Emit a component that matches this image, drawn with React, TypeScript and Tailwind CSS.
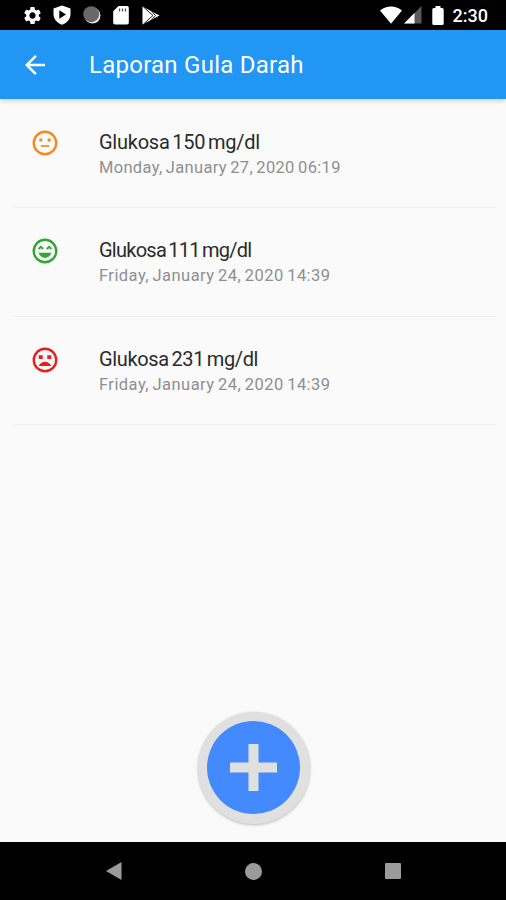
import { MdArrowBack, MdSettings } from "react-icons/md";

const readings = [
  {
    title: "Glukosa 150 mg/dl",
    date: "Monday, January 27, 2020 06:19",
    mood: "neutral",
    color: "text-[#f58a1f]",
    titleSpacing: "tracking-[-0.250px]",
    dateSpacing: "tracking-[0.310px]",
  },
  {
    title: "Glukosa 111 mg/dl",
    date: "Friday, January 24, 2020 14:39",
    mood: "happy",
    color: "text-[#33a436]",
    titleSpacing: "tracking-[-0.750px]",
    dateSpacing: "tracking-[0.450px]",
  },
  {
    title: "Glukosa 231 mg/dl",
    date: "Friday, January 24, 2020 14:39",
    mood: "sad",
    color: "text-[#e5201d]",
    titleSpacing: "tracking-[-0.350px]",
    dateSpacing: "tracking-[0.450px]",
  },
];

function Face({ mood, className }: { mood: string; className: string }) {
  return (
    <svg className={className} width="30" height="30" viewBox="0 0 24 24" fill="none">
      <circle cx="12" cy="12" r="9" stroke="currentColor" strokeWidth="1.9" />
      {mood === "neutral" && (
        <>
          <circle cx="8.700" cy="9.500" r="1.400" fill="currentColor" />
          <circle cx="15.300" cy="9.500" r="1.400" fill="currentColor" />
          <path stroke="currentColor" strokeWidth="1.400" d="M8.700 14.400h6.600" />
        </>
      )}
      {mood === "happy" && (
        <>
          <path stroke="currentColor" strokeWidth="1.500" d="M6.900 10.400 8.700 8.600l1.800 1.800M13.500 10.400l1.800-1.800 1.800 1.800" />
          <path fill="currentColor" d="M6.900 13.400h10.200c-.700 2.500-2.700 4.100-5.100 4.100s-4.400-1.600-5.100-4.100z" />
        </>
      )}
      {mood === "sad" && (
        <>
          <path fill="currentColor" d="M7 8.200h3.200v2.900H7zM13.800 8.200H17v2.900h-3.200z" />
          <path fill="currentColor" d="M12 13.300c-2.300 0-4.200 1.400-5 3.500h10c-.800-2.100-2.700-3.500-5-3.500z" />
        </>
      )}
    </svg>
  );
}

function StatusBar() {
  return (
    <div className="flex h-[30px] shrink-0 items-center justify-between bg-black pr-[18px] pl-[22px] text-white">
      <div className="flex items-center">
        <MdSettings size={21} />
        <svg className="ml-[10px]" width="18" height="20" viewBox="0 0 18 20">
          <path fill="#fff" d="M9 0.5 17.5 3.5V9c0 5-3.2 8.8-8.5 10.8C3.700 17.800.500 14 .500 9V3.500z" />
          <path fill="#000" d="M6.300 5.300 13 9.500l-6.700 4.200z" />
        </svg>
        <svg className="ml-[12px]" width="18" height="18" viewBox="0 0 18 18">
          <circle cx="9.500" cy="9.500" r="8" fill="#e4e4e4" />
          <circle cx="8.200" cy="8.200" r="8" fill="#686868" />
        </svg>
        <svg className="ml-[12px]" width="16" height="19" viewBox="0 0 16 19">
          <path fill="#fff" d="M5.500 0H14a1.800 1.800 0 0 1 1.800 1.800v15A1.800 1.800 0 0 1 14 18.600H2A1.800 1.800 0 0 1 .200 16.800V5.300z" />
          <path stroke="#555" strokeWidth="1.300" d="M6.500 2.500v3M9.500 2.500v3M12.500 2.500v3" />
        </svg>
        <svg className="ml-[13px]" width="18" height="19" viewBox="0 0 18 19">
          <path fill="#fff" d="M.500.500 17.500 9.500.500 18.500z" />
          <path stroke="#222" strokeWidth="1" fill="none" d="M1.500 1 11 9.500 1.500 18M9 4.500l4.500 5L9 14.500" />
        </svg>
      </div>
      <div className="flex items-center">
        <svg width="22" height="18" viewBox="0 0 22 18">
          <path fill="#fff" d="M0 4.500C6.500-.800 15.500-.800 22 4.500L11 17.800z" />
        </svg>
        <svg className="ml-[2px]" width="18" height="18" viewBox="0 0 18 18">
          <path fill="#5a5a5a" d="M17.500 0v17.500H0z" />
          <path fill="#fff" d="M10.500 7v10.500H0z" />
        </svg>
        <svg className="ml-[10px]" width="12" height="19" viewBox="0 0 12 19">
          <path fill="#fff" d="M3.500 0h5v2h1.700A1.500 1.500 0 0 1 11.700 3.500v14a1.500 1.500 0 0 1-1.500 1.500H1.800A1.500 1.500 0 0 1 .300 17.500v-14A1.500 1.500 0 0 1 1.800 2h1.700z" />
        </svg>
        <span className="ml-[9px] pt-[2px] text-[18px] leading-none font-medium">2:30</span>
      </div>
    </div>
  );
}

function NavBar() {
  return (
    <div className="flex h-[58px] shrink-0 items-center justify-between bg-black pr-[105px] pl-[106px]">
      <svg width="16" height="18" viewBox="0 0 16 18">
        <path fill="#9b9b9b" d="M15.500 0v18L0 9z" />
      </svg>
      <div className="size-[17px] rounded-full bg-[#9b9b9b]" />
      <div className="size-4 rounded-[1px] bg-[#9b9b9b]" />
    </div>
  );
}

export default function App() {
  return (
    <div className="flex h-[900px] w-[506px] flex-col overflow-hidden bg-[#fafafa] font-['Roboto',sans-serif]">
      <StatusBar />
      <header className="z-10 flex h-[69px] shrink-0 items-center bg-[#2196f3] pl-[20px] text-white shadow-[0_1px_6px_rgba(0,0,0,0.22)]">
        <MdArrowBack size={30} />
        <h1 className="ml-[39px] text-[24px] leading-none tracking-[0.25px] whitespace-nowrap">
          Laporan Gula Darah
        </h1>
      </header>

      <main className="flex grow flex-col pt-px pr-[10px] pl-3">
        {readings.map(({ title, date, mood, color, titleSpacing, dateSpacing }, i) => (
          <div
            key={i}
            className="flex h-[108.300px] shrink-0 items-start border-b border-[#efefef] pt-[28px] pl-[18px]"
          >
            <Face mood={mood} className={color} />
            <div className="ml-[39px] pt-[2px] whitespace-nowrap">
              <div className={`text-[20px] leading-[24px] text-[#2b2b2b] [word-spacing:-2px] ${titleSpacing}`}>{title}</div>
              <div className={`mt-px text-[16.500px] leading-[26px] text-[#8f8f8f] [word-spacing:-1px] ${dateSpacing}`}>{date}</div>
            </div>
          </div>
        ))}

        <button
          className="mt-auto mb-[18px] flex size-[112px] items-center justify-center self-center rounded-full bg-[#e0e0e0] shadow-[0_1px_3px_rgba(0,0,0,0.25)]"
          aria-label="Tambah"
        >
          <span className="mr-px mb-[2px] flex size-[93px] items-center justify-center rounded-full bg-[#448aff]">
            <svg width="47" height="47" viewBox="0 0 47 47">
              <path fill="#e0e0e0" d="M18.500 0h10v18.500H47v10H28.500V47h-10V28.500H0v-10h18.500z" />
            </svg>
          </span>
        </button>
      </main>
      <NavBar />
    </div>
  );
}
